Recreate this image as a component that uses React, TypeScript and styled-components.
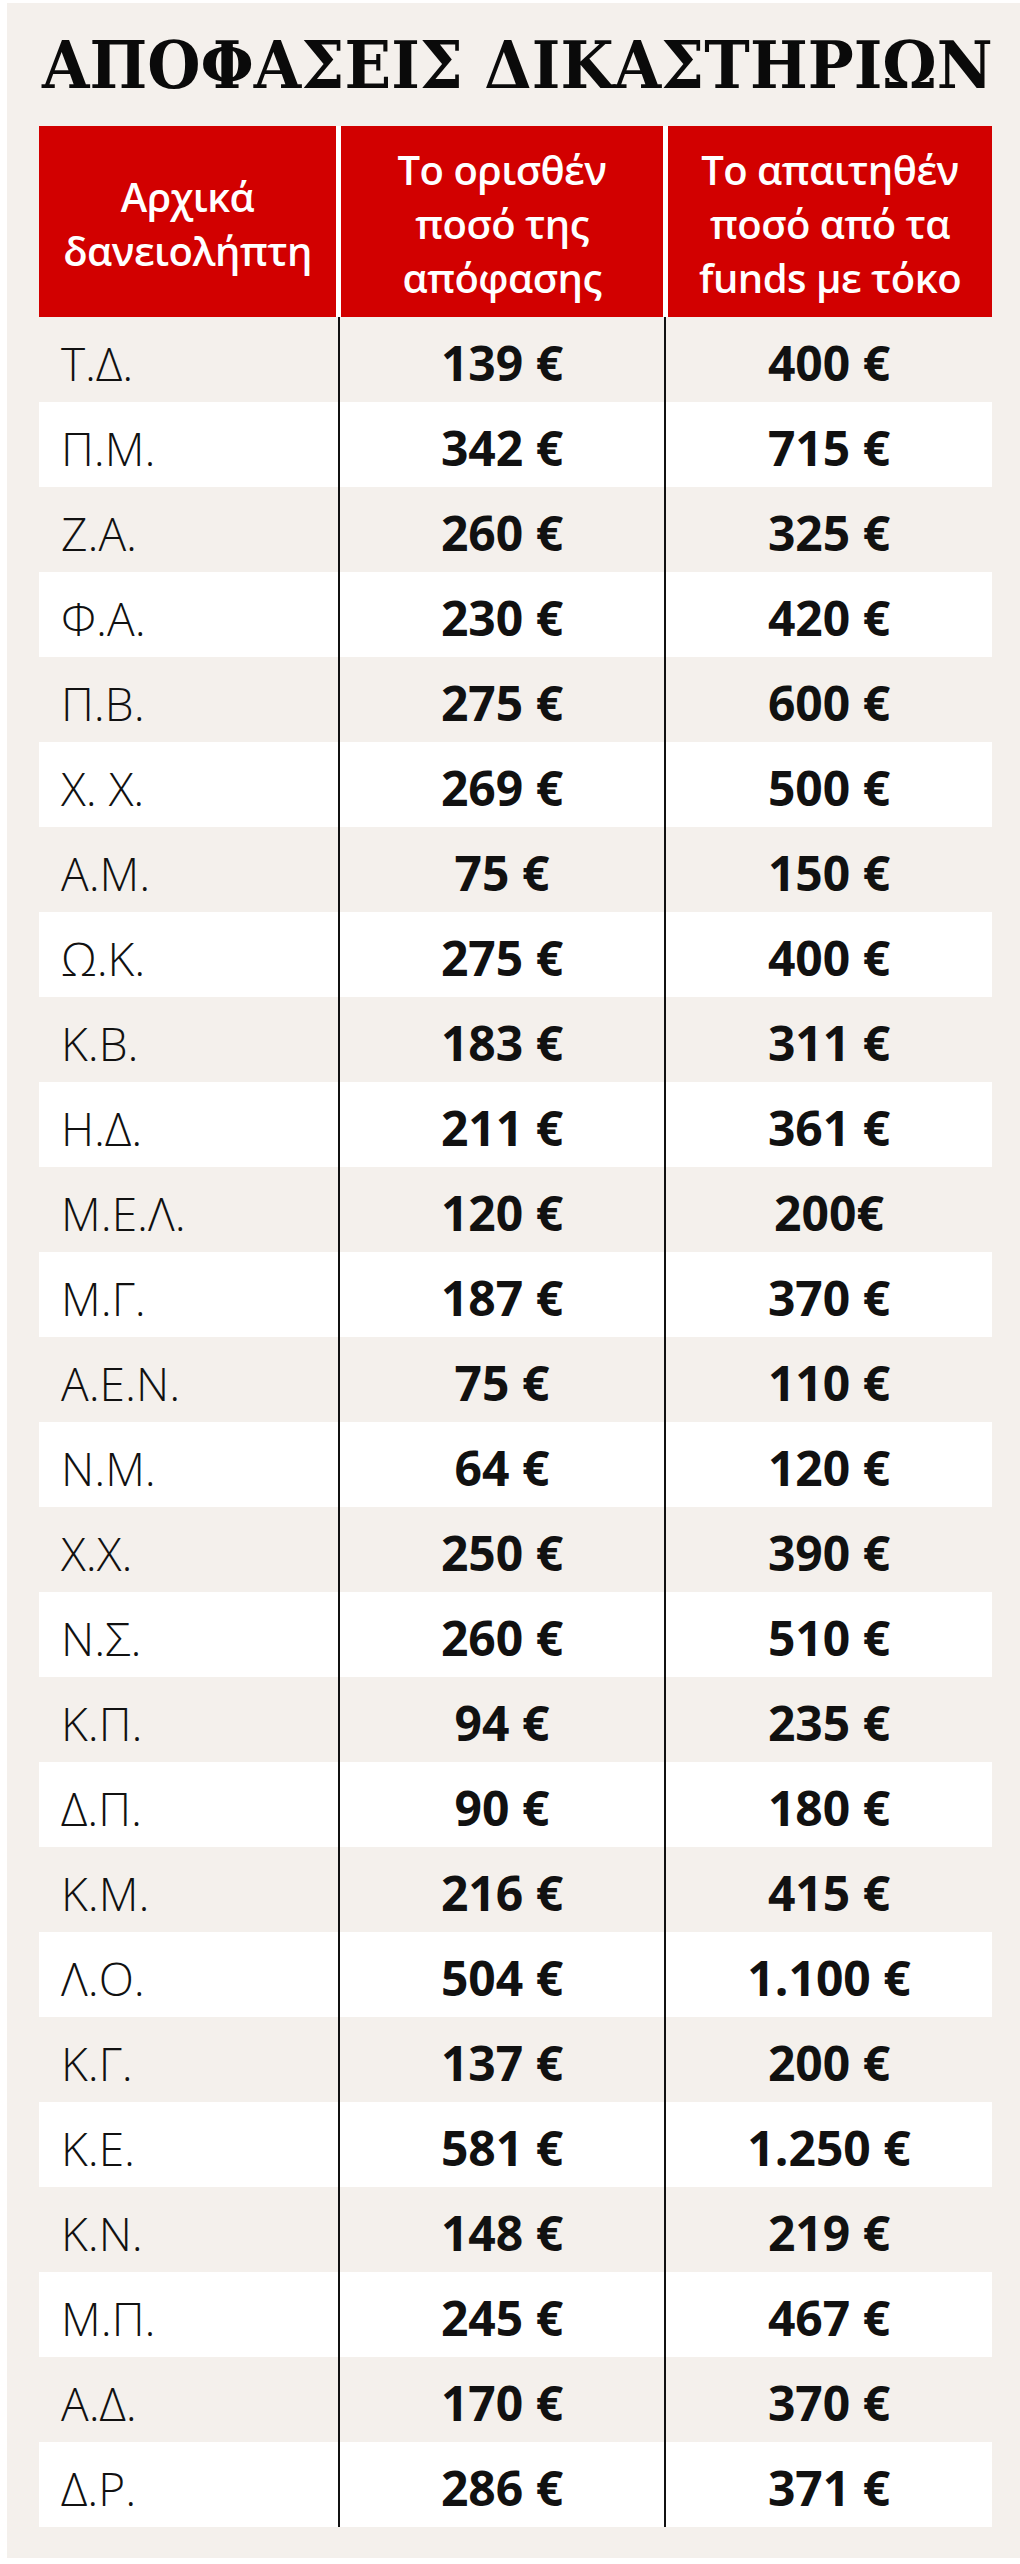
import React from 'react';
import styled, { createGlobalStyle } from 'styled-components';

const rows: [string, string, string][] = [
  ['Τ.Δ.', '139 €', '400 €'],
  ['Π.Μ.', '342 €', '715 €'],
  ['Ζ.Α.', '260 €', '325 €'],
  ['Φ.Α.', '230 €', '420 €'],
  ['Π.Β.', '275 €', '600 €'],
  ['Χ. Χ.', '269 €', '500 €'],
  ['Α.Μ.', '75 €', '150 €'],
  ['Ω.Κ.', '275 €', '400 €'],
  ['Κ.Β.', '183 €', '311 €'],
  ['Η.Δ.', '211 €', '361 €'],
  ['Μ.Ε.Λ.', '120 €', '200€'],
  ['Μ.Γ.', '187 €', '370 €'],
  ['Α.Ε.Ν.', '75 €', '110 €'],
  ['Ν.Μ.', '64 €', '120 €'],
  ['Χ.Χ.', '250 €', '390 €'],
  ['Ν.Σ.', '260 €', '510 €'],
  ['Κ.Π.', '94 €', '235 €'],
  ['Δ.Π.', '90 €', '180 €'],
  ['Κ.Μ.', '216 €', '415 €'],
  ['Λ.Ο.', '504 €', '1.100 €'],
  ['Κ.Γ.', '137 €', '200 €'],
  ['Κ.Ε.', '581 €', '1.250 €'],
  ['Κ.Ν.', '148 €', '219 €'],
  ['Μ.Π.', '245 €', '467 €'],
  ['Α.Δ.', '170 €', '370 €'],
  ['Δ.Ρ.', '286 €', '371 €'],
];

const App = () => {
  return (
    <>
      <GlobalStyle />
      <Panel>
        <Title>ΑΠΟΦΑΣΕΙΣ ΔΙΚΑΣΤΗΡΙΩΝ</Title>
        <HeaderRow>
          <HeaderCell>
            Αρχικά
            <br />
            δανειολήπτη
          </HeaderCell>
          <HeaderCell>
            Το ορισθέν
            <br />
            ποσό της
            <br />
            απόφασης
          </HeaderCell>
          <HeaderCell>
            Το απαιτηθέν
            <br />
            ποσό από τα
            <br />
            funds με τόκο
          </HeaderCell>
        </HeaderRow>
        <Body>
          {rows.map(([name, decided, claimed], i) => (
            <Row key={name + i} $striped={i % 2 === 1}>
              <NameCell>{name}</NameCell>
              <Divider />
              <AmountCell>{decided}</AmountCell>
              <Divider />
              <AmountCell>{claimed}</AmountCell>
            </Row>
          ))}
        </Body>
      </Panel>
    </>
  );
};

const GlobalStyle = createGlobalStyle`
  html, body {
    margin: 0;
    padding: 0;
    background: #ffffff;
  }
`;

const Panel = styled.div`
  margin: 3px 0 0 7px;
  padding: 29px 28px 32px 32px;
  background-color: #f4f0ec;
  height: 2555px;
  box-sizing: border-box;
`;

const Title = styled.h1`
  margin: 0 0 28px 3px;
  font-family: 'DejaVu Serif', serif;
  font-weight: 700;
  font-size: 66px;
  line-height: 66px;
  color: #0a0a0a;
  white-space: nowrap;
  transform: scaleX(0.927);
  transform-origin: left center;
`;

const HeaderRow = styled.div`
  display: grid;
  grid-template-columns: 297px 322px 324px;
  column-gap: 5px;
  height: 191px;
  background-color: #ffffff;
`;

const HeaderCell = styled.div`
  display: flex;
  align-items: center;
  justify-content: center;
  text-align: center;
  padding-top: 4px;
  background-color: #d20000;
  color: #ffffff;
  font-family: 'Open Sans', sans-serif;
  font-weight: 600;
  font-size: 40px;
  line-height: 54px;
  letter-spacing: -0.5px;
`;

const Body = styled.div`
  display: flex;
  flex-direction: column;
`;

const Row = styled.div<{ $striped: boolean }>`
  display: grid;
  grid-template-columns: 299px 2px 324px 2px 326px;
  height: 85px;
  background-color: ${(p) => (p.$striped ? '#ffffff' : 'transparent')};
`;

const Divider = styled.div`
  background-color: #111111;
`;

const NameCell = styled.div`
  display: flex;
  align-items: center;
  padding: 6px 0 0 22px;
  font-family: 'Open Sans', sans-serif;
  font-weight: 300;
  font-size: 46px;
  color: #111111;
`;

const AmountCell = styled.div`
  display: flex;
  align-items: center;
  justify-content: center;
  padding-top: 6px;
  font-family: 'Open Sans', sans-serif;
  font-weight: 700;
  font-size: 48px;
  color: #111111;
`;

export default App;
